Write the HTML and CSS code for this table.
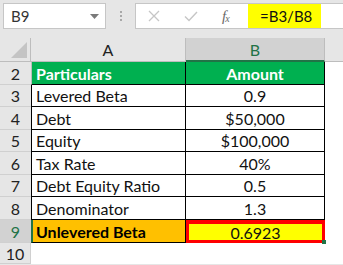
FILE: index.html
```html
<!DOCTYPE html>
<html>
<head>
<meta charset="utf-8">
<link rel="stylesheet" href="styles.css">
</head>
<body>
<div class="app">
  <div class="topbar">
    <div class="namebox">
      <span class="ref">B9</span>
      <svg class="dd" width="9" height="5" viewBox="0 0 9 5"><path d="M0 0H9L4.5 5Z" fill="#7a7a7a"/></svg>
    </div>
    <div class="dots"><i></i><i></i><i></i></div>
    <div class="fbox">
      <svg class="ico" width="12" height="12" viewBox="0 0 12 12"><path d="M1 1L11 11M11 1L1 11" stroke="#c6c6c6" stroke-width="1.3" fill="none"/></svg>
      <svg class="ico chk" width="14" height="11" viewBox="0 0 14 11"><path d="M1 5.5L5 9.5L13 1" stroke="#c6c6c6" stroke-width="1.4" fill="none"/></svg>
      <span class="fx">f<sub>x</sub></span>
    </div>
    <div class="finput">=B3/B8</div>
    <div class="frest"></div>
  </div>
  <div class="sheet">
    <div class="rh corner"><svg width="16" height="16" viewBox="0 0 16 16"><path d="M16 0V16H0Z" fill="#c4c4c4"/></svg></div>
    <div class="ch">A</div>
    <div class="ch sel">B</div>
    <div class="ch rest"></div>

    <div class="rh">2</div>
    <div class="c a g">Particulars</div>
    <div class="c b g">Amount</div>
    <div class="c r"></div>

    <div class="rh">3</div>
    <div class="c a">Levered Beta</div>
    <div class="c b">0.9</div>
    <div class="c r"></div>

    <div class="rh">4</div>
    <div class="c a">Debt</div>
    <div class="c b">$50,000</div>
    <div class="c r"></div>

    <div class="rh">5</div>
    <div class="c a">Equity</div>
    <div class="c b">$100,000</div>
    <div class="c r"></div>

    <div class="rh">6</div>
    <div class="c a">Tax Rate</div>
    <div class="c b">40%</div>
    <div class="c r"></div>

    <div class="rh">7</div>
    <div class="c a">Debt Equity Ratio</div>
    <div class="c b">0.5</div>
    <div class="c r"></div>

    <div class="rh">8</div>
    <div class="c a">Denominator</div>
    <div class="c b">1.3</div>
    <div class="c r"></div>

    <div class="rh rsel">9</div>
    <div class="c a o">Unlevered Beta</div>
    <div class="c b y">0.6923<span class="handle"></span></div>
    <div class="c r"></div>

    <div class="rh last">10</div>
    <div class="c e"></div>
    <div class="c e"></div>
    <div class="c r"></div>
  </div>
</div>
</body>
</html>
```
FILE: styles.css
```css
* { box-sizing: border-box; }
html, body { margin: 0; padding: 0; }
body {
  width: 343px;
  height: 265px;
  overflow: hidden;
  background: #e6e6e6;
  font-family: "Lato", "Liberation Sans", sans-serif;
}
.app { width: 343px; }
.topbar {
  display: flex;
  align-items: flex-start;
  height: 38px;
  padding: 3px 0 0 3px;
}
.namebox {
  width: 103px;
  height: 26px;
  background: #fff;
  border: 1px solid #c6c6c6;
  display: flex;
  align-items: center;
  justify-content: space-between;
  padding: 0 6px 0 7px;
  font-size: 15px;
  color: #333;
}
.namebox .dd { margin-top: 1px; }
.dots {
  width: 29px;
  height: 26px;
  display: flex;
  flex-direction: column;
  align-items: center;
  justify-content: center;
  gap: 2px;
}
.dots i {
  display: block;
  width: 2px;
  height: 2px;
  background: #a8a8a8;
}
.fbox {
  width: 113px;
  height: 26px;
  background: #fff;
  border: 1px solid #c6c6c6;
  border-right: none;
  display: flex;
  align-items: center;
  padding-left: 12px;
}
.fbox .chk { margin-left: 24px; }
.fx {
  margin-left: 24px;
  font-family: "Liberation Serif", serif;
  font-style: italic;
  font-size: 15px;
  color: #6a6a6a;
  line-height: 1;
}
.fx sub { font-size: 10px; vertical-align: -1px; margin-left: -1px; }
.finput {
  width: 73px;
  height: 26px;
  background: #ffff00;
  border-top: 1px solid #c6c6c6;
  border-bottom: 1px solid #c6c6c6;
  font-size: 15px;
  line-height: 24px;
  padding-left: 12px;
  color: #111;
}
.frest {
  flex: 1;
  height: 26px;
  background: #fff;
  border-top: 1px solid #c6c6c6;
  border-bottom: 1px solid #c6c6c6;
}
.sheet {
  display: grid;
  grid-template-columns: 31px 155px 139px 18px;
  grid-template-rows: 24px 23px 22px 23px 22px 23px 22px 23px 23px 21px;
  font-size: 16px;
}
.rh {
  background: #e6e6e6;
  border-bottom: 1px solid #d0d0d0;
  display: flex;
  align-items: center;
  justify-content: center;
  color: #222;
  font-size: 16px;
}
.rh.last { border-right: 1px solid #d0d0d0; }
.corner {
  justify-content: flex-end;
  align-items: flex-end;
  padding: 0 3px 3px 0;
  border-bottom: 1px solid #bdbdbd;
  border-right: 1px solid #bdbdbd;
}
.rsel {
  background: #d2d2d2;
  color: #217346;
}
.ch {
  background: #e6e6e6;
  border-right: 1px solid #bdbdbd;
  border-bottom: 1px solid #bdbdbd;
  display: flex;
  align-items: center;
  justify-content: center;
  color: #222;
}
.ch.sel {
  background: #d2d2d2;
  color: #217346;
  border-bottom: 2px solid #217346;
}
.ch.rest { border-right: none; }
.c {
  background: #fff;
  display: flex;
  align-items: center;
  color: #111;
  border-bottom: 1px solid #000;
  border-right: 1px solid #000;
}
.c.a {
  padding-left: 4px;
  border-left: 1px solid #000;
}
.c.b { justify-content: center; }
.c.r { border: none; background: #fff; }
.c.e { border: none; }
.c.g {
  background: #00b050;
  color: #fff;
  font-weight: bold;
}
.c.a.g { border-left-color: #bdbdbd; }
.c.o {
  background: #ffc000;
  font-weight: bold;
  color: #000;
  border-left: 2px solid #217346;
  padding-left: 3px;
}
.c.y {
  background: #ffff00;
  border: 3px solid #ff0000;
  border-top-width: 4px;
  position: relative;
}
.handle {
  position: absolute;
  right: -4px;
  bottom: -4px;
  width: 4px;
  height: 4px;
  background: #217346;
}
```
